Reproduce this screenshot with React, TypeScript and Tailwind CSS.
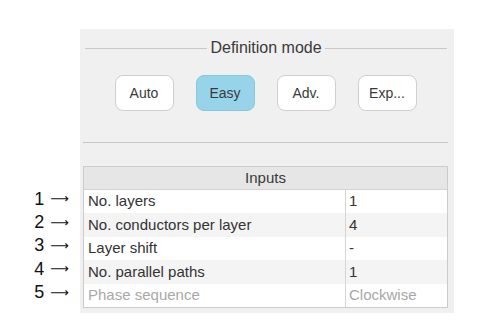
import React from 'react'

const modes = ['Auto', 'Easy', 'Adv.', 'Exp...']

const rows = [
  { label: 'No. layers', value: '1' },
  { label: 'No. conductors per layer', value: '4' },
  { label: 'Layer shift', value: '-' },
  { label: 'No. parallel paths', value: '1' },
  { label: 'Phase sequence', value: 'Clockwise', disabled: true },
]

export default function App() {
  return (
    <div className="w-[490px] h-[331px] bg-white flex font-['Liberation_Sans',Arial,sans-serif] text-[#333]">
      {/* Row numbers */}
      <div className="w-[80px] pt-[187px] pr-[11px] flex flex-col items-end">
        {rows.map((r, i) => (
          <div key={r.label} className="h-[23.4px] flex items-center text-[18px] leading-none text-[#111] whitespace-nowrap">
            {i + 1}
            <span className="ml-[6px] font-['DejaVu_Sans',sans-serif] text-[13px]">⟶</span>
          </div>
        ))}
      </div>

      {/* Panel */}
      <div className="mt-[29px] w-[374px] h-[284px] bg-[#f0f0f0] flex flex-col">
        {/* Definition mode title */}
        <div className="mt-[9px] h-[20px] flex items-center pl-[5px] pr-[7px]">
          <div className="flex-1 h-px bg-[#c8c8c8]" />
          <span className="px-[3px] text-[16px] leading-none text-[#3a3a3a]">Definition mode</span>
          <div className="flex-1 h-px bg-[#c8c8c8]" />
        </div>

        {/* Mode buttons */}
        <div className="mt-[17px] flex justify-center gap-[22px] pr-[3px]">
          {modes.map(m => (
            <button
              key={m}
              className={
                m === 'Easy'
                  ? 'w-[59px] h-[36px] rounded-[8px] border border-[#86c8dd] bg-[#97d4ea] text-[14px] text-[#3a3a3a]'
                  : 'w-[59px] h-[36px] rounded-[8px] border border-[#cfcfcf] bg-white text-[14px] text-[#3a3a3a]'
              }
            >
              {m}
            </button>
          ))}
        </div>

        <div className="mt-[31px] ml-[3px] mr-[6px] h-px bg-[#c8c8c8]" />

        {/* Inputs table */}
        <div className="mt-[23px] ml-[3px] mr-[6px] border border-[#cccccc] bg-white text-[15px]">
          <div className="h-[23px] flex items-center justify-center bg-[#e6e6e6] border-b border-[#d4d4d4] text-[#3a3a3a]">
            Inputs
          </div>
          {rows.map((r, i) => (
            <div
              key={r.label}
              className={`h-[23.4px] flex items-center ${i % 2 === 1 ? 'bg-[#f4f4f4]' : 'bg-white'} ${r.disabled ? 'text-[#a8a8a8]' : 'text-[#333]'}`}
            >
              <div className="w-[262px] h-full flex items-center pl-[4px] border-r border-[#d4d4d4] whitespace-nowrap">
                {r.label}
              </div>
              <div className="flex-1 pl-[3px] whitespace-nowrap">{r.value}</div>
            </div>
          ))}
        </div>
      </div>
    </div>
  )
}
